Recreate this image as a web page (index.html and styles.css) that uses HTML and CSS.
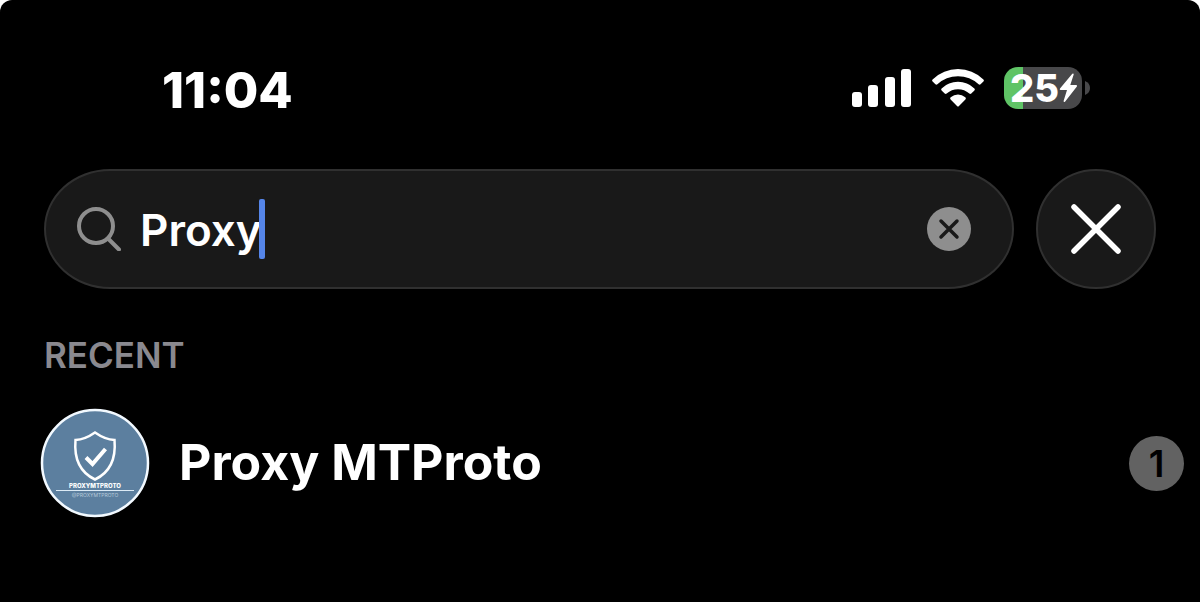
FILE: index.html
```html
<!DOCTYPE html>
<html lang="en">
<head>
<meta charset="utf-8">
<meta name="viewport" content="width=device-width, initial-scale=1">
<title>Search</title>
<link rel="stylesheet" href="styles.css">
</head>
<body>
<div class="screen">
  <header class="status">
    <time class="clock">11:04</time>
    <div class="indicators">
      <svg class="signal" width="60" height="38" viewBox="0 0 60 38" fill="#fff" role="img" aria-label="Signal">
        <rect x="0" y="23" width="10" height="15" rx="3"/>
        <rect x="16" y="16" width="10" height="22" rx="3"/>
        <rect x="33" y="8" width="10" height="30" rx="3"/>
        <rect x="49" y="0" width="10" height="38" rx="3"/>
      </svg>
      <svg class="wifi" width="52" height="38" viewBox="0 0 52 38" fill="#fff" role="img" aria-label="Wi-Fi">
        <path d="M.6 10.500Q11.500 0 26 0T51.400 10.500Q52.400 11.500 51.400 12.500L48.600 15.300Q47.600 16.200 46.600 15.300Q38 7.300 26 7.300T5.400 15.300Q4.400 16.200 3.400 15.300L.6 12.500Q-.4 11.500.6 10.500Z"/>
        <path d="M9.600 19.400Q16.500 12.800 26 12.800T42.400 19.400Q43.400 20.400 42.400 21.400L39.300 24.500Q38.300 25.300 37.300 24.500Q32.500 20.200 26 20.200T14.700 24.500Q13.700 25.300 12.700 24.500L9.600 21.400Q8.600 20.400 9.600 19.400Z"/>
        <path d="M18.700 28.300Q22 25.600 26 25.600T33.300 28.300Q34.500 29.300 33.400 30.400L27 36.900Q26 37.900 25 36.900L18.600 30.400Q17.500 29.300 18.700 28.300Z"/>
      </svg>
      <div class="battery">
        <div class="cell">
          <span class="level">25</span>
          <svg class="bolt" width="19" height="30" viewBox="0 0 19 30" fill="#fff" aria-hidden="true">
            <path d="M13.300.8 1 15.500Q.2 17 1.700 17H8L4.600 28Q4.600 29.600 6 28.700L17.900 13.600Q18.600 12 17.100 12H11.300L14.700 1.600Q14.700 0 13.300.8Z"/>
          </svg>
        </div>
        <svg class="nub" width="5" height="14" viewBox="0 0 5 14" aria-hidden="true"><path d="M0 0Q5 2 5 7T0 14Z" fill="#48484a"/></svg>
      </div>
    </div>
  </header>

  <main>
    <form class="search-row">
      <div class="search">
        <svg class="lens" width="44" height="44" viewBox="0 0 44 44" fill="none" stroke="#8e8e8e" stroke-width="4" stroke-linecap="round" aria-hidden="true">
          <circle cx="19" cy="19" r="17"/>
          <path d="M31 31.500 42 42.500"/>
        </svg>
        <input class="query" type="text" value="Proxy" aria-label="Search">
        <span class="caret"></span>
        <button class="clear" type="button" aria-label="Clear text">
          <svg width="44" height="44" viewBox="0 0 44 44" aria-hidden="true">
            <circle cx="22" cy="22" r="22" fill="#8e8e8e"/>
            <path d="M14 14 30 30M30 14 14 30" stroke="#191919" stroke-width="3.500" stroke-linecap="round"/>
          </svg>
        </button>
      </div>
      <button class="close" type="button" aria-label="Close search">
        <svg width="50" height="50" viewBox="0 0 50 50" fill="none" stroke="#fff" stroke-width="5.500" stroke-linecap="round" aria-hidden="true">
          <path d="M3 3 47 47M47 3 3 47"/>
        </svg>
      </button>
    </form>

    <section>
      <h2 class="heading">RECENT</h2>
      <a class="result" href="#">
        <svg class="avatar" width="110" height="110" viewBox="0 0 110 110" aria-hidden="true">
          <circle cx="55" cy="55" r="53" fill="#5c7f9f" stroke="#f2f9ff" stroke-width="2.500"/>
          <path d="M55 24.500Q45 31.500 35.500 32Q33 61 55 71.500Q77 61 74.500 32Q65 31.500 55 24.500Z" fill="none" stroke="#fff" stroke-width="2.500"/>
          <path d="M46 49.500 52.500 56 65.500 41" fill="none" stroke="#fff" stroke-width="4"/>
          <text class="logo-name" x="55" y="80" text-anchor="middle">PROXYMTPROTO</text>
          <path d="M16 82.500H94" stroke="#dceaf5"/>
          <text class="logo-handle" x="55" y="89" text-anchor="middle">@PROXYMTPROTO</text>
        </svg>
        <span class="name">Proxy MTProto</span>
        <span class="badge">1</span>
      </a>
    </section>
  </main>
</div>
</body>
</html>
```
FILE: styles.css
```css
* {
  box-sizing: border-box;
}

body {
  margin: 0;
  background: #fff;
  font-family: Inter, "Liberation Sans", sans-serif;
  color: #fff;
}

.screen {
  min-height: 100vh;
  background: #000;
  border-radius: 12px 12px 0 0;
}

.status {
  display: flex;
  align-items: center;
  justify-content: space-between;
  padding: 60px 110px 0 162px;
}

.clock {
  font-size: 50px;
  line-height: 60px;
  font-weight: 800;
}

.indicators {
  display: flex;
  align-items: center;
  gap: 20px;
  padding-bottom: 4px;
}

.battery {
  display: flex;
  align-items: center;
  gap: 3px;
}

.cell {
  display: flex;
  align-items: center;
  width: 78px;
  height: 42px;
  padding-left: 6px;
  border-radius: 14px;
  background: linear-gradient(90deg, #5fc466 25%, #48484a 25%);
}

.level {
  font-size: 38px;
  line-height: 42px;
  font-weight: 800;
}

.search-row {
  display: flex;
  gap: 22px;
  margin: 0;
  padding: 49px 44px 0;
}

.search {
  display: flex;
  flex: 1;
  align-items: center;
  height: 120px;
  padding: 0 41px 0 31px;
  border: 2px solid #303030;
  border-radius: 66px / 60px;
  background: #191919;
}

.query {
  field-sizing: content;
  margin: 0 0 0 19px;
  padding: 2px 0 0;
  border: 0;
  outline: 0;
  background: none;
  color: #fff;
  font: 600 44px/60px Inter, "Liberation Sans", sans-serif;
}

.caret {
  width: 6px;
  height: 60px;
  margin-left: -3px;
  border-radius: 2px;
  background: #5585e8;
}

.clear {
  display: flex;
  margin-left: auto;
  padding: 0;
  border: 0;
  background: none;
}

.close {
  display: flex;
  align-items: center;
  justify-content: center;
  width: 120px;
  height: 120px;
  padding: 0;
  border: 2px solid #303030;
  border-radius: 50%;
  background: #191919;
}

.heading {
  margin: 0;
  padding: 46px 44px 0;
  color: #8a898f;
  font-size: 35px;
  line-height: 40px;
  font-weight: 600;
}

.result {
  display: flex;
  align-items: center;
  padding: 33px 16px 0 40px;
  color: #fff;
  text-decoration: none;
}

.name {
  flex: 1;
  margin-left: 29px;
  padding-bottom: 2px;
  font-size: 50px;
  line-height: 60px;
  font-weight: 700;
}

.badge {
  width: 55px;
  height: 55px;
  border-radius: 50%;
  background: #626262;
  color: #000;
  font-size: 37px;
  line-height: 55px;
  font-weight: 600;
  text-align: center;
}

.logo-name {
  fill: #fff;
  font-size: 6px;
  font-weight: 800;
}

.logo-handle {
  fill: #b7cbdb;
  font-size: 5px;
}
```
